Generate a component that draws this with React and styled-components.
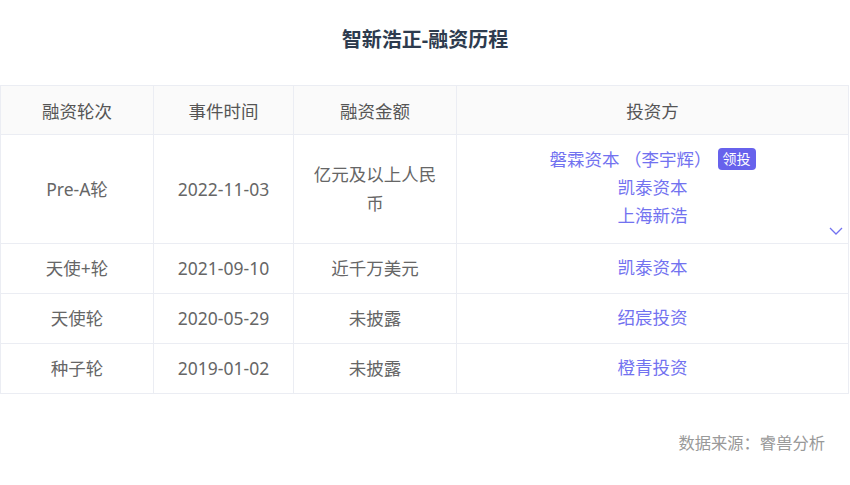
import React from 'react';
import styled, { createGlobalStyle } from 'styled-components';

const GlobalStyle = createGlobalStyle`
  body {
    margin: 0;
    background: #fff;
    font-family: 'Noto Sans', 'Noto Sans CJK SC', sans-serif;
  }
`;

const Page = styled.div`
  width: 850px;
  height: 485px;
  display: flex;
  flex-direction: column;
`;

const Title = styled.h1`
  margin: 0;
  padding-top: 26px;
  height: 58px;
  box-sizing: border-box;
  text-align: center;
  font-size: 20px;
  line-height: 28px;
  font-weight: 700;
  color: #2d3b4e;
`;

const Table = styled.table`
  width: 849px;
  border-collapse: collapse;
  table-layout: fixed;
  margin-top: 27px;
`;

const Th = styled.th`
  height: 48px;
  background: #fafafa;
  border: 1px solid #ebedf3;
  font-weight: 400;
  font-size: 17.5px;
  color: #555;
  padding: 0;
`;

const Td = styled.td`
  position: relative;
  height: ${(p) => (p.$tall ? '108px' : '49px')};
  border: 1px solid #ebedf3;
  padding: 0 18px;
  text-align: center;
  font-size: 17.5px;
  line-height: 29px;
  color: #666;
`;

const InvestorList = styled.div`
  display: flex;
  flex-direction: column;
  align-items: center;
  line-height: 28px;
  padding-bottom: 4px;
`;

const Investor = styled.span`
  color: #7272f0;
  display: inline-flex;
  align-items: center;
`;

const Badge = styled.span`
  margin-left: 6px;
  background: #6762ec;
  color: #fff;
  font-size: 14px;
  line-height: 22px;
  padding: 0 5px;
  border-radius: 4px;
`;

const Chevron = styled.svg`
  position: absolute;
  right: 5px;
  bottom: 8px;
`;

const Source = styled.div`
  margin-top: 36px;
  padding-right: 25px;
  text-align: right;
  font-size: 16.3px;
  color: #999;
`;

const rows = [
  { round: 'Pre-A轮', date: '2022-11-03', amount: '亿元及以上人民币', investors: [
    { name: '磐霖资本 （李宇辉）', lead: true },
    { name: '凯泰资本' },
    { name: '上海新浩' },
  ] },
  { round: '天使+轮', date: '2021-09-10', amount: '近千万美元', investors: [{ name: '凯泰资本' }] },
  { round: '天使轮', date: '2020-05-29', amount: '未披露', investors: [{ name: '绍宸投资' }] },
  { round: '种子轮', date: '2019-01-02', amount: '未披露', investors: [{ name: '橙青投资' }] },
];

const App = () => {
  return (
    <Page>
      <GlobalStyle />
      <Title>智新浩正-融资历程</Title>
      <Table>
        <colgroup>
          <col style={{ width: 153 }} />
          <col style={{ width: 140 }} />
          <col style={{ width: 163 }} />
          <col />
        </colgroup>
        <thead>
          <tr>
            <Th>融资轮次</Th>
            <Th>事件时间</Th>
            <Th>融资金额</Th>
            <Th>投资方</Th>
          </tr>
        </thead>
        <tbody>
          {rows.map((r) => {
            const tall = r.investors.length > 1;
            return (
              <tr key={r.date}>
                <Td $tall={tall}>{r.round}</Td>
                <Td $tall={tall}>{r.date}</Td>
                <Td $tall={tall}>{r.amount}</Td>
                <Td $tall={tall}>
                  <InvestorList>
                    {r.investors.map((i) => (
                      <Investor key={i.name}>
                        {i.name}
                        {i.lead && <Badge>领投</Badge>}
                      </Investor>
                    ))}
                  </InvestorList>
                  {tall && (
                    <Chevron width="14" height="8" viewBox="0 0 14 8">
                      <path d="M1 1l6 6 6-6" fill="none" stroke="#7272f0" strokeWidth="1.3" />
                    </Chevron>
                  )}
                </Td>
              </tr>
            );
          })}
        </tbody>
      </Table>
      <Source>数据来源：睿兽分析</Source>
    </Page>
  );
};

export default App;
